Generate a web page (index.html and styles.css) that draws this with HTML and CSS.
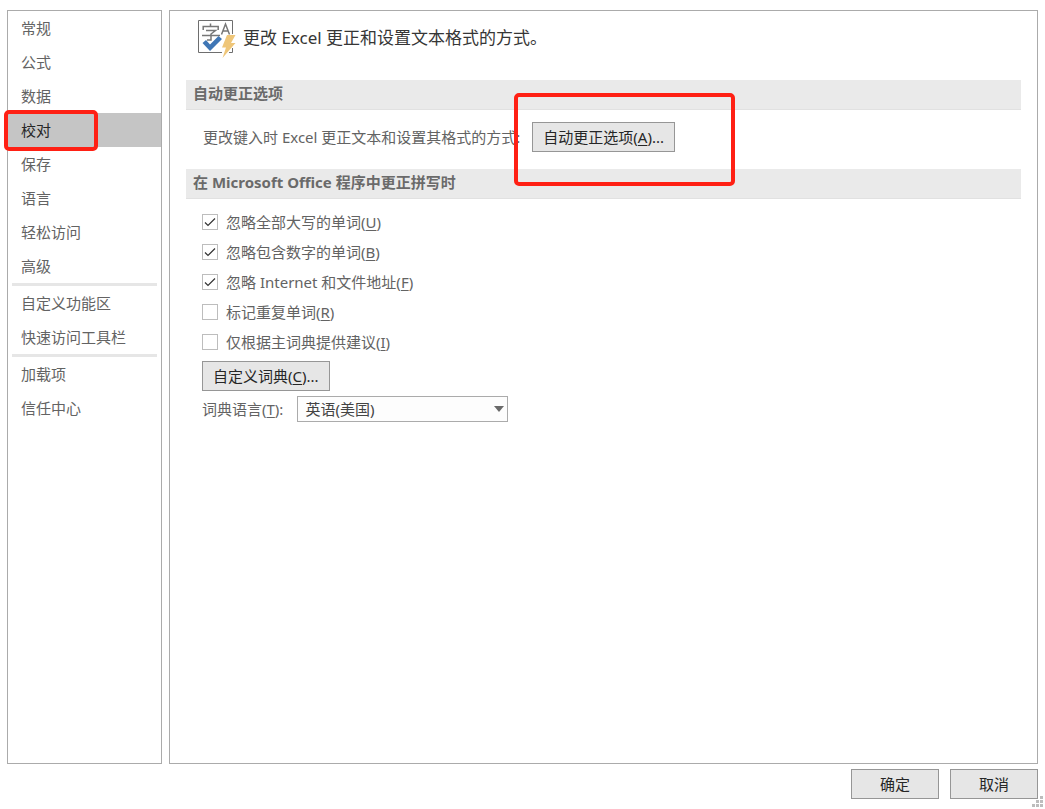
FILE: index.html
```html
<!DOCTYPE html>
<html lang="zh-CN">
<head>
<meta charset="utf-8">
<title>Excel 选项</title>
<link rel="stylesheet" href="styles.css">
</head>
<body>
<div class="dialog">
  <div class="panes">
    <nav class="sidebar">
      <button class="nav-item" type="button">常规</button>
      <button class="nav-item" type="button">公式</button>
      <button class="nav-item" type="button">数据</button>
      <div class="marked">
        <button class="nav-item selected" type="button" aria-current="page">校对</button>
        <span class="mark mark-nav"></span>
      </div>
      <button class="nav-item" type="button">保存</button>
      <button class="nav-item" type="button">语言</button>
      <button class="nav-item" type="button">轻松访问</button>
      <button class="nav-item" type="button">高级</button>
      <hr class="divider">
      <button class="nav-item" type="button">自定义功能区</button>
      <button class="nav-item" type="button">快速访问工具栏</button>
      <hr class="divider">
      <button class="nav-item" type="button">加载项</button>
      <button class="nav-item" type="button">信任中心</button>
    </nav>
    <main class="content">
      <header class="heading">
        <svg class="heading-icon" width="38" height="38" viewBox="0 0 38 38" aria-hidden="true">
          <path d="M24 32.500H.5V.5h34V14M31 32.500h3.500V28" fill="none" stroke="#6e6e6e"/>
          <g fill="none" stroke="#777" stroke-width="1.500">
            <path d="M12.500 3.500v3M5.200 10V6.500h15V10M8 10.500h9.500l-4.500 3.500v6h-4M4 15.500h18"/>
            <path d="M23.500 14.500l4-10.500 4 10.500M25 11h5"/>
          </g>
          <path d="M4.500 23l3.500-3 4 4.500L20.500 16l3.500 3L12 31z" fill="#3f76b5"/>
          <path d="M29 15h8.500l-4.500 8h4.500L24.500 38l3.500-10.500h-4z" fill="#efc679"/>
        </svg>
        <h1 class="title">更改 Excel 更正和设置文本格式的方式。</h1>
      </header>
      <h2 class="section">自动更正选项</h2>
      <div class="autocorrect">
        <span>更改键入时 Excel 更正文本和设置其格式的方式:</span>
        <div class="marked">
          <button class="button" type="button">自动更正选项(<u>A</u>)...</button>
          <span class="mark mark-button"></span>
        </div>
      </div>
      <h2 class="section">在 Microsoft Office 程序中更正拼写时</h2>
      <div class="spelling">
        <label class="check"><input class="box" type="checkbox" checked><span>忽略全部大写的单词(<u>U</u>)</span></label>
        <label class="check"><input class="box" type="checkbox" checked><span>忽略包含数字的单词(<u>B</u>)</span></label>
        <label class="check"><input class="box" type="checkbox" checked><span>忽略 Internet 和文件地址(<u>F</u>)</span></label>
        <label class="check"><input class="box" type="checkbox"><span>标记重复单词(<u>R</u>)</span></label>
        <label class="check"><input class="box" type="checkbox"><span>仅根据主词典提供建议(<u>I</u>)</span></label>
        <button class="button dictionaries" type="button">自定义词典(<u>C</u>)...</button>
        <div class="language">
          <label for="language">词典语言(<u>T</u>):</label>
          <div class="select-wrap">
            <select class="select" id="language"><option>英语(美国)</option></select>
            <svg class="arrow" width="10" height="6" viewBox="0 0 10 6" aria-hidden="true"><path d="M0 0h10L5 6z" fill="#6a6a6a"/></svg>
          </div>
        </div>
      </div>
    </main>
  </div>
  <footer class="footer">
    <button class="button action" type="button">确定</button>
    <button class="button action" type="button">取消</button>
  </footer>
  <svg class="grip" width="11" height="11" viewBox="0 0 11 11" aria-hidden="true">
    <path d="M8 0h3v3H8zM4 4h3v3H4zM8 4h3v3H8zM0 8h3v3H0zM4 8h3v3H4zM8 8h3v3H8z" fill="#bdbdbd"/>
  </svg>
</div>
</body>
</html>
```
FILE: styles.css
```css
* {
  box-sizing: border-box;
}

body {
  margin: 0;
  background: #fff;
  color: #636363;
  font: 15px/20px "Noto Sans", "Noto Sans CJK SC", sans-serif;
}

button,
select {
  font: inherit;
}

u {
  text-underline-offset: 2px;
  text-decoration-thickness: 1px;
}

.dialog {
  position: relative;
  display: flex;
  flex-direction: column;
  gap: 5px;
  min-height: 100vh;
  padding: 10px 7px;
}

.panes {
  display: flex;
  flex: 1;
  gap: 7px;
}

.sidebar {
  flex: none;
  display: flex;
  flex-direction: column;
  width: 155px;
  border: 1px solid #ababab;
}

.nav-item {
  width: 100%;
  height: 34px;
  padding: 0 13px;
  border: 0;
  background: none;
  color: #636363;
  text-align: left;
}

.nav-item.selected {
  display: block;
  background: #c5c5c5;
  color: #262626;
}

.divider {
  height: 3px;
  margin: 0 4px;
  border: 0;
  background: #e6e6e6;
}

.marked {
  position: relative;
}

.mark {
  position: absolute;
  border: 4px solid #ff2014;
  border-radius: 5px;
  pointer-events: none;
}

.mark-nav {
  top: -3px;
  left: -4px;
  width: 94px;
  height: 41px;
}

.mark-button {
  top: -29px;
  left: -18px;
  width: 221px;
  height: 93px;
}

.content {
  flex: 1;
  padding: 9px 16px;
  border: 1px solid #ababab;
}

.heading {
  display: flex;
  align-items: flex-start;
  gap: 7px;
  height: 60px;
  padding-left: 12px;
}

.title {
  margin: 0;
  color: #363636;
  font-size: 17px;
  font-weight: 400;
  line-height: 36px;
}

.section {
  height: 30px;
  margin: 0;
  padding: 0 7px;
  border-bottom: 1px solid #e1e1e1;
  background: #eaeaea;
  color: #6a6a6a;
  font-size: 15px;
  font-weight: 700;
  line-height: 26px;
}

.autocorrect {
  display: flex;
  align-items: center;
  gap: 12px;
  padding: 12px 17px 17px;
}

.button {
  display: block;
  height: 30px;
  padding: 0 10px;
  border: 1px solid #969696;
  background: #e6e6e6;
  color: #262626;
}

.spelling {
  padding: 8px 16px;
}

.check {
  display: flex;
  align-items: center;
  gap: 8px;
  height: 30px;
}

.box {
  appearance: none;
  width: 16px;
  height: 16px;
  margin: 0;
  border: 1px solid #bdbdbd;
  background: #fff;
}

.box:checked {
  background: url("data:image/svg+xml,%3Csvg xmlns='http://www.w3.org/2000/svg' viewBox='0 0 14 14'%3E%3Cpath d='M2 7.500l3 3 7-7' fill='none' stroke='%23333' stroke-width='1.200'/%3E%3C/svg%3E") center / 14px 14px no-repeat;
}

.dictionaries {
  margin: 4px 0 5px;
}

.language {
  display: flex;
  align-items: center;
  gap: 14px;
}

.select-wrap {
  position: relative;
}

.select {
  appearance: none;
  display: block;
  width: 211px;
  height: 26px;
  padding: 0 7px;
  border: 1px solid #ababab;
  border-radius: 0;
  background: #fdfdfd;
  color: #444;
}

.arrow {
  position: absolute;
  top: 10px;
  right: 4px;
  pointer-events: none;
}

.footer {
  display: flex;
  justify-content: flex-end;
  gap: 11px;
}

.action {
  width: 88px;
}

.grip {
  position: absolute;
  right: 2px;
  bottom: 2px;
}
```
